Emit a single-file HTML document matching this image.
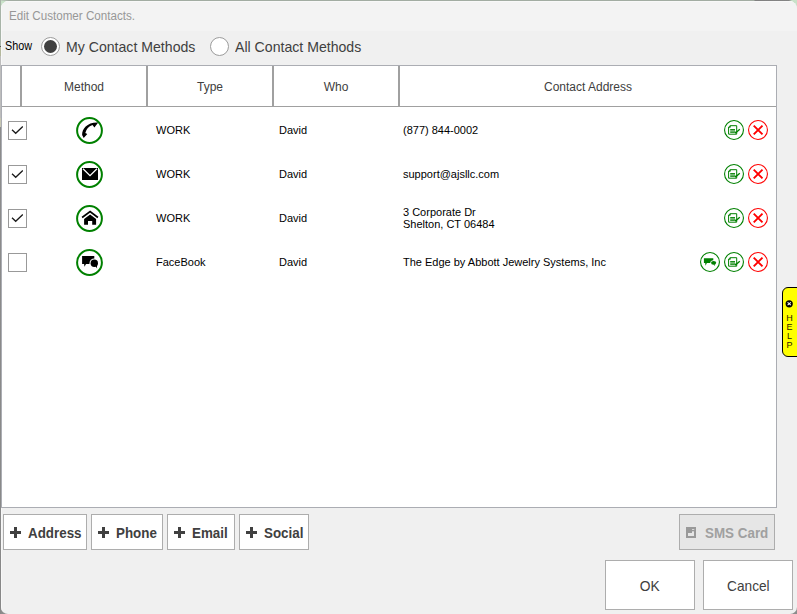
<!DOCTYPE html>
<html lang="en">
<head>
<meta charset="utf-8">
<title>Edit Customer Contacts.</title>
<style>
*{box-sizing:border-box;margin:0;padding:0}
html,body{width:797px;height:614px;overflow:hidden}
body{position:relative;background:#8c8c8c;font-family:"Liberation Sans",sans-serif;color:#000}
.abs{position:absolute}
.t{position:absolute;white-space:nowrap}
#bgtl{left:0;top:0;width:40px;height:40px;background:#c9e2c9}
#bgtr{right:0;top:0;width:40px;height:40px;background:#c9e2c9}
#bgtop{left:0;top:0;width:797px;height:1px;background:linear-gradient(90deg,#c4d4c4 0,#a2aca2 9px,#a2aca2 754px,#808080 755px,#848484 789px,#c9e2c9 792px)}
#bgleft{left:0;top:0;width:1px;height:614px;background:linear-gradient(#a8b4a8 0,#a8b4a8 46px,#555 46px,#555 47px,#b4b89c 47px,#b4b89c 56px,#bdbdbd 56px,#bdbdbd 118px,#c8c8b4 118px,#c8c8b4 127px,#8c8c8c 127px,#888 100%)}
#win{left:1px;top:1px;width:796px;height:613px;background:#f0f0f0;border-radius:8px 8px 7px 7px;overflow:hidden;box-shadow:inset 1px 1px 0 #f8f8f8}
#titlebar{left:0;top:0;width:796px;height:30px;background:#f3f3f3;box-shadow:inset 1px 1px 0 #f8f8f8}
#title{left:7.7px;top:7px;font-size:12px;line-height:16px;color:#979797;transform:scaleX(.969);transform-origin:0 0}
#show{left:4px;top:37px;font-size:12px;line-height:16px;color:#000;transform:scaleX(.9);transform-origin:0 0}
.radio{width:19px;height:19px;border-radius:50%;border:1px solid #9c9c9c;background:#fff}
.radio.on::after{content:"";position:absolute;left:2px;top:2px;width:13px;height:13px;border-radius:50%;background:#404040}
.rlabel{font-size:14.5px;line-height:20px;color:#404040;transform:scaleX(.973);transform-origin:0 0}
#grid{left:0;top:64px;width:776px;height:443px;background:#fff;border:1px solid #abadb3}
.hsep{top:0;width:2px;height:40px;background:#a0a0a0}
#hline{left:0;top:40px;width:774px;height:1px;background:#a0a0a0}
.hd{top:13px;font-size:12px;line-height:16px;color:#404040;text-align:center}
.cell{font-size:11px;line-height:12px;color:#000}
.cb{left:6px;width:19px;height:19px;background:#fff;border:1px solid #999}
.btn{background:#fff;border:1px solid #adadad;height:36px;top:513px}
.btn .lbl{position:absolute;top:9px;font-size:14px;line-height:18px;font-weight:bold;color:#404040;white-space:nowrap;transform:scaleX(.955);transform-origin:0 0}
.plus{position:absolute;left:6px;top:12px;width:11px;height:11px}
.big{background:#fff;border:1px solid #adadad;top:559px;height:50px;width:90px;font-size:15px;color:#404040;text-align:center;line-height:50px}
#sms{left:678px;top:513px;width:96px;height:36px;background:#e6e6e6;border:1px solid #adadad}
#smslbl{left:25px;top:9px;font-size:14px;line-height:18px;font-weight:bold;color:#a0a0a0;transform:scaleX(.957);transform-origin:0 0}
#help{left:781px;top:286px;width:20px;height:70px;background:#ffff00;border:1px solid #000;border-radius:6px 0 0 6px}
.hl{left:0;width:13px;text-align:center;font-size:9px;line-height:10px;color:#2a1a00}
</style>
</head>
<body>
<div class="abs" id="bgtl"></div>
<div class="abs" id="bgtr"></div>
<div class="abs" id="bgtop"></div>
<div class="abs" id="bgleft"></div>
<div class="abs" id="win">
  <div class="abs" id="titlebar"></div>
  <div class="t" id="title">Edit Customer Contacts.</div>
  <div class="t" id="show">Show</div>
  <div class="abs radio on" style="left:40px;top:36px"></div>
  <div class="t rlabel" style="left:65px;top:36px">My Contact Methods</div>
  <div class="abs radio" style="left:209px;top:36px"></div>
  <div class="t rlabel" style="left:234px;top:36px">All Contact Methods</div>

  <div class="abs" id="grid">
    <div class="abs hsep" style="left:18px"></div>
    <div class="abs hsep" style="left:144px"></div>
    <div class="abs hsep" style="left:270px"></div>
    <div class="abs hsep" style="left:396px"></div>
    <div class="abs" id="hline"></div>
    <div class="t hd" style="left:20px;width:124px">Method</div>
    <div class="t hd" style="left:146px;width:124px">Type</div>
    <div class="t hd" style="left:272px;width:124px">Who</div>
    <div class="t hd" style="left:398px;width:376px">Contact Address</div>
    <!--ROWS-->
    <div class="abs cb" style="left:6px;top:55px"><svg width="17" height="17" viewBox="0 0 17 17" style="display:block"><path d="M3,7.7 L6.7,11.3 L13.8,4.5" fill="none" stroke="#1a1a1a" stroke-width="1.3"/></svg></div>
    <svg class="abs" style="left:74px;top:51px" width="27" height="27" viewBox="0 0 27 27"><circle cx="13.5" cy="13.5" r="12.4" fill="#fff" stroke="#008000" stroke-width="2"/><path d="M22.2,5.6 L18.4,10.4 L16.5,8 Q10.7,9.9 9.3,16.1 L11.3,17 L7.7,21 L6.1,18.1 C6,12 11,5.2 22.2,5.6 Z" fill="#000"/></svg>
    <div class="t cell" style="left:154px;top:58px">WORK</div>
    <div class="t cell" style="left:277px;top:58px">David</div>
    <div class="t cell" style="left:401px;top:58px">(877) 844-0002</div>
    <svg class="abs" style="left:722px;top:54px" width="20" height="20" viewBox="0 0 20 20"><circle cx="10" cy="10" r="9.45" fill="none" stroke="#008000" stroke-width="1.1"/><path d="M4.6,7.1 L6.2,5.7 H12.7 V14.2 H4.6 Z" fill="none" stroke="#008000" stroke-width="1"/><path d="M4.6,7.3 H6.3 V5.7" fill="none" stroke="#008000" stroke-width="0.9"/><path d="M6.2,9.6 H11 M6.2,11 H11 M6.2,12.3 H10.6" stroke="#008000" stroke-width="1"/><path d="M10.6,11.8 L11.7,12.8 L15.8,9.3" fill="none" stroke="#008000" stroke-width="1.3"/></svg>
    <svg class="abs" style="left:746px;top:54px" width="20" height="20" viewBox="0 0 20 20"><circle cx="10" cy="10" r="9.45" fill="none" stroke="#ff0000" stroke-width="1.1"/><path d="M5.7,5.6 L14.5,14.4 M14.5,5.6 L5.7,14.4" stroke="#ff0000" stroke-width="1.9"/></svg>
    <div class="abs cb" style="left:6px;top:99px"><svg width="17" height="17" viewBox="0 0 17 17" style="display:block"><path d="M3,7.7 L6.7,11.3 L13.8,4.5" fill="none" stroke="#1a1a1a" stroke-width="1.3"/></svg></div>
    <svg class="abs" style="left:74px;top:95px" width="27" height="27" viewBox="0 0 27 27"><circle cx="13.5" cy="13.5" r="12.4" fill="#fff" stroke="#008000" stroke-width="2"/><rect x="6" y="7" width="16" height="12" fill="#000"/><path d="M7,7.7 L14,14.6 L21,7.7" fill="none" stroke="#fff" stroke-width="1.3"/></svg>
    <div class="t cell" style="left:154px;top:102px">WORK</div>
    <div class="t cell" style="left:277px;top:102px">David</div>
    <div class="t cell" style="left:401px;top:102px">support@ajsllc.com</div>
    <svg class="abs" style="left:722px;top:98px" width="20" height="20" viewBox="0 0 20 20"><circle cx="10" cy="10" r="9.45" fill="none" stroke="#008000" stroke-width="1.1"/><path d="M4.6,7.1 L6.2,5.7 H12.7 V14.2 H4.6 Z" fill="none" stroke="#008000" stroke-width="1"/><path d="M4.6,7.3 H6.3 V5.7" fill="none" stroke="#008000" stroke-width="0.9"/><path d="M6.2,9.6 H11 M6.2,11 H11 M6.2,12.3 H10.6" stroke="#008000" stroke-width="1"/><path d="M10.6,11.8 L11.7,12.8 L15.8,9.3" fill="none" stroke="#008000" stroke-width="1.3"/></svg>
    <svg class="abs" style="left:746px;top:98px" width="20" height="20" viewBox="0 0 20 20"><circle cx="10" cy="10" r="9.45" fill="none" stroke="#ff0000" stroke-width="1.1"/><path d="M5.7,5.6 L14.5,14.4 M14.5,5.6 L5.7,14.4" stroke="#ff0000" stroke-width="1.9"/></svg>
    <div class="abs cb" style="left:6px;top:143px"><svg width="17" height="17" viewBox="0 0 17 17" style="display:block"><path d="M3,7.7 L6.7,11.3 L13.8,4.5" fill="none" stroke="#1a1a1a" stroke-width="1.3"/></svg></div>
    <svg class="abs" style="left:74px;top:139px" width="27" height="27" viewBox="0 0 27 27"><circle cx="13.5" cy="13.5" r="12.4" fill="#fff" stroke="#008000" stroke-width="2"/><path d="M6.1,12.5 L14.1,6.5 L21.9,12.5" fill="none" stroke="#000" stroke-width="1.7"/><path d="M8.1,14.1 L14.1,9.5 L20.1,14.1 V19.7 H16.2 V16 H12 V19.7 H8.1 Z" fill="#000"/></svg>
    <div class="t cell" style="left:154px;top:146px">WORK</div>
    <div class="t cell" style="left:277px;top:146px">David</div>
    <div class="t cell" style="left:401px;top:140px">3 Corporate Dr<br>Shelton, CT 06484</div>
    <svg class="abs" style="left:722px;top:142px" width="20" height="20" viewBox="0 0 20 20"><circle cx="10" cy="10" r="9.45" fill="none" stroke="#008000" stroke-width="1.1"/><path d="M4.6,7.1 L6.2,5.7 H12.7 V14.2 H4.6 Z" fill="none" stroke="#008000" stroke-width="1"/><path d="M4.6,7.3 H6.3 V5.7" fill="none" stroke="#008000" stroke-width="0.9"/><path d="M6.2,9.6 H11 M6.2,11 H11 M6.2,12.3 H10.6" stroke="#008000" stroke-width="1"/><path d="M10.6,11.8 L11.7,12.8 L15.8,9.3" fill="none" stroke="#008000" stroke-width="1.3"/></svg>
    <svg class="abs" style="left:746px;top:142px" width="20" height="20" viewBox="0 0 20 20"><circle cx="10" cy="10" r="9.45" fill="none" stroke="#ff0000" stroke-width="1.1"/><path d="M5.7,5.6 L14.5,14.4 M14.5,5.6 L5.7,14.4" stroke="#ff0000" stroke-width="1.9"/></svg>
    <div class="abs cb" style="left:6px;top:187px"></div>
    <svg class="abs" style="left:74px;top:183px" width="27" height="27" viewBox="0 0 27 27"><circle cx="13.5" cy="13.5" r="12.4" fill="#fff" stroke="#008000" stroke-width="2"/><path d="M6.1,7 H18.3 V15.1 H10 L8.5,17.7 L8.1,15.1 H6.1 Z" fill="#000"/><circle cx="18.3" cy="14.2" r="4.8" fill="#fff"/><circle cx="18.3" cy="14.2" r="3.7" fill="#000"/><path d="M19,16.6 L21.1,19.4 L20.9,15.6 Z" fill="#000"/></svg>
    <div class="t cell" style="left:154px;top:190px">FaceBook</div>
    <div class="t cell" style="left:277px;top:190px">David</div>
    <div class="t cell" style="left:401px;top:190px">The Edge by Abbott Jewelry Systems, Inc</div>
    <svg class="abs" style="left:722px;top:186px" width="20" height="20" viewBox="0 0 20 20"><circle cx="10" cy="10" r="9.45" fill="none" stroke="#008000" stroke-width="1.1"/><path d="M4.6,7.1 L6.2,5.7 H12.7 V14.2 H4.6 Z" fill="none" stroke="#008000" stroke-width="1"/><path d="M4.6,7.3 H6.3 V5.7" fill="none" stroke="#008000" stroke-width="0.9"/><path d="M6.2,9.6 H11 M6.2,11 H11 M6.2,12.3 H10.6" stroke="#008000" stroke-width="1"/><path d="M10.6,11.8 L11.7,12.8 L15.8,9.3" fill="none" stroke="#008000" stroke-width="1.3"/></svg>
    <svg class="abs" style="left:746px;top:186px" width="20" height="20" viewBox="0 0 20 20"><circle cx="10" cy="10" r="9.45" fill="none" stroke="#ff0000" stroke-width="1.1"/><path d="M5.7,5.6 L14.5,14.4 M14.5,5.6 L5.7,14.4" stroke="#ff0000" stroke-width="1.9"/></svg>
    <svg class="abs" style="left:698px;top:186px" width="20" height="20" viewBox="0 0 20 20"><circle cx="10" cy="10" r="9.45" fill="none" stroke="#008000" stroke-width="1.1"/><path d="M3.9,6.3 H13.3 V11.1 H6.9 L5.5,13.7 L5.2,11.1 H3.9 Z" fill="#008000"/><ellipse cx="13.6" cy="10.85" rx="3.3" ry="2.6" fill="#fff"/><ellipse cx="13.6" cy="10.85" rx="2.6" ry="1.9" fill="#008000"/><path d="M13.6,12.4 L14.9,14 L15,12.2 Z" fill="#008000"/></svg>
    <!--/ROWS-->
  </div>

  <div class="abs btn" style="left:2px;width:84px"><svg class="plus" viewBox="0 0 11 11"><path d="M5.5,0 V11 M0,5.5 H11" stroke="#404040" stroke-width="3"/></svg><div class="lbl" style="left:24px">Address</div></div>
  <div class="abs btn" style="left:90px;width:72px"><svg class="plus" viewBox="0 0 11 11"><path d="M5.5,0 V11 M0,5.5 H11" stroke="#404040" stroke-width="3"/></svg><div class="lbl" style="left:24px">Phone</div></div>
  <div class="abs btn" style="left:166px;width:68px"><svg class="plus" viewBox="0 0 11 11"><path d="M5.5,0 V11 M0,5.5 H11" stroke="#404040" stroke-width="3"/></svg><div class="lbl" style="left:24px">Email</div></div>
  <div class="abs btn" style="left:238px;width:70px"><svg class="plus" viewBox="0 0 11 11"><path d="M5.5,0 V11 M0,5.5 H11" stroke="#404040" stroke-width="3"/></svg><div class="lbl" style="left:24px">Social</div></div>


  <div class="abs" id="sms"><svg class="abs" style="left:6px;top:12px" width="10" height="11" viewBox="0 0 10 11"><rect x="0" y="0" width="10" height="11" fill="#999"/><rect x="2" y="6" width="6" height="3" fill="#e6e6e6"/><rect x="6" y="4.3" width="2" height="1.8" fill="#e6e6e6"/><rect x="6" y="2" width="2.3" height="0.8" fill="#e6e6e6"/></svg><div class="t" id="smslbl">SMS Card</div></div>
  <div class="abs" id="help"><svg class="abs" style="left:2px;top:12px" width="8" height="8" viewBox="0 0 8 8"><circle cx="4.2" cy="3.8" r="3.6" fill="#000"/><path d="M2.6,2.4 L5.8,5.2 M5.8,2.4 L2.6,5.2" stroke="#fff" stroke-width="1.1"/></svg><div class="t hl" style="top:25px">H</div><div class="t hl" style="top:34px">E</div><div class="t hl" style="top:43px">L</div><div class="t hl" style="top:52px">P</div></div>
  <div class="abs big" style="left:604px"><span style="display:inline-block;transform:scaleX(.92)">OK</span></div>
  <div class="abs big" style="left:702px"><span style="display:inline-block;transform:scaleX(.91)">Cancel</span></div>
</div>
</body>
</html>
